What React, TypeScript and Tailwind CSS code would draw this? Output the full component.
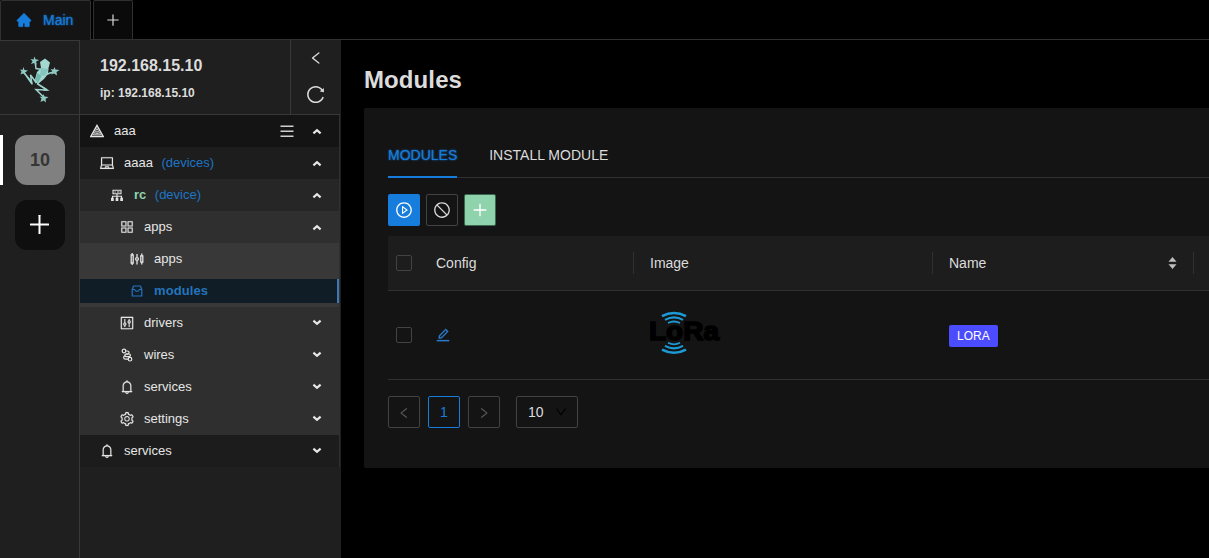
import React from "react";
import {
  AiFillHome,
  AiOutlinePlus,
  AiOutlineLeft,
  AiOutlineRight,
  AiOutlineDown,
  AiOutlineReload,
  AiOutlineLaptop,
  AiOutlineAppstore,
  AiOutlineControl,
  AiOutlineBell,
  AiOutlineSetting,
  AiOutlinePlayCircle,
  AiOutlineStop,
  AiOutlineEdit,
} from "react-icons/ai";

const FrogLogo = () => (
  <svg width="40" height="50" viewBox="0 0 40 50" fill="none" className="mt-1">
    <path d="M20 7 25 3.500 30 7.500 28.500 13 28 19 24 24 18 29 14.500 26 17 17 21 13Z" fill="#a3d8d0" />
    <path d="M21 13 28.500 14 25 21 20 20Z" fill="#86c5bd" />
    <path d="M17.500 18 21.500 21 18 28 15 25Z" fill="#74b7af" />
    <g stroke="#9dd2cb" strokeWidth="1.500" strokeLinejoin="miter">
      <path d="M21 14.200 16 13.500 15 6" />
      <path d="M27 19.200 30 18 35 16.500" />
      <path d="M16.500 28 10.500 20 12 29 4 17.500" />
      <path d="M17 28.500 27 35 16 34.500 24 42.500" />
    </g>
    <path d="M15.500 27 28.500 36 22 35.500 27 34ZM15 25.500 10 18.500 12 21.500 16 29ZM5 18 12.500 30 12 26Z" fill="#9dd2cb" />
    <path d="m14.500 1.500 1 2.800 3.500.7-3 1.800 1 3-3-1.800-3 1 1.500-2.700-2-2.300 3 .5zM3.500 12l1 3 3.500.5-3 2 1 3-3-2-2.500 1 1-3L0 14.500l2.500.5zM34.500 12l1 2.500 4 .5-3 2 .5 3.500-3-2-3 1 1.500-3-2-2.500 3 .5zM23.500 39l1 2.500 4 .5-3 2 .5 3.500-2.500-2-3 1.500 1-3.500-2-2 3 .5z" fill="#8fcac2" />
  </svg>
);

const TriangleIcon = () => (
  <svg width="14" height="14" viewBox="0 0 14 14" fill="none" stroke="currentColor">
    <path d="M7 1.500 13.200 12.500H.8Z" strokeWidth="1.500" />
    <path d="M7 4.500 10.600 10.800H3.400Z" strokeWidth=".9" />
    <path d="M7 7 8.500 9.500H5.500Z" strokeWidth=".8" />
  </svg>
);

const NetworkIcon = () => (
  <svg width="14" height="14" viewBox="0 0 14 14" fill="none" stroke="currentColor" strokeWidth="1.100">
    <path d="M3 2.200h8v3.600H3zM4.500 4h1.200M7 4h2.500M7 5.800v3M2.500 10.300V8.300h9v2M7 8.300v2" />
    <path d="M1.700 10.500h1.400v1.900H1.700zM6.300 10.500h1.400v1.900H6.300zM10.900 10.500h1.400v1.900h-1.400z" strokeWidth="1.300" />
  </svg>
);

const SlidersIcon = () => (
  <svg width="14" height="14" viewBox="0 0 14 14" fill="none" stroke="currentColor" strokeWidth="1.300">
    <path d="M1.200 3h2v8h-2zM2.200 1v2M2.200 11v2M10.800 3.800h2v6.400h-2zM11.800 1.500v2M11.800 10.500v2" />
    <path d="M7 2v3M7 9v3.500" />
    <circle cx="7" cy="7" r="1.400" />
  </svg>
);

const ModuleIcon = () => (
  <svg width="14" height="14" viewBox="0 0 14 14" fill="none" stroke="currentColor" strokeWidth="1.200" strokeLinejoin="round">
    <path d="M2.200 5.500 3.600 2h6.800l1.400 3.500V12H2.200zM2.200 5.500h2.500c.4 2.500 4.200 2.500 4.600 0h2.500" />
  </svg>
);

const WiresIcon = () => (
  <svg width="14" height="14" viewBox="0 0 14 14" fill="none" stroke="currentColor" strokeWidth="1.200">
    <circle cx="4" cy="3" r="1.800" />
    <circle cx="10" cy="11.200" r="1.800" />
    <path d="M5.800 3h1.400c2.400 0 2.400 2.700.4 3.200H5.800M8.200 11.200H5.600C3 11.200 3 7.900 5.400 7.900" />
    <rect x="4.800" y="6" width="5.600" height="2.600" rx="1.300" />
  </svg>
);

const MenuIcon = () => (
  <svg width="14" height="14" viewBox="0 0 14 14" fill="none" stroke="#cfcfcf" strokeWidth="1.500" className="mr-[18px]">
    <path d="M.5 2.200h13M.5 7.200h13M.5 12.200h13" />
  </svg>
);

const Chevron = ({ open }: { open?: boolean }) => (
  <svg width="10" height="7" viewBox="0 0 10 7" fill="none" stroke="#e6e6e6" strokeWidth="2.200" className={open ? "" : "mb-0.5 rotate-180"}>
    <path d="M1.400 5.300 5 2.200 8.600 5.300" />
  </svg>
);

type RowProps = {
  icon: React.ReactNode;
  label: string;
  kind?: string;
  open?: boolean;
  pad: string;
  bg: string;
  labelClass?: string;
  menu?: boolean;
  leaf?: boolean;
};

const Row = ({ icon, label, kind, open, pad, bg, labelClass = "", menu, leaf }: RowProps) => (
  <div className={`flex h-8 items-center pr-[17px] text-[13px] text-[#e6e6e6] ${pad} ${bg}`}>
    <span className="flex w-3.5 shrink-0 justify-center text-base">{icon}</span>
    <span className={`ml-2.5 ${labelClass}`}>{label}</span>
    {kind && <span className="ml-[8.500px] text-[#1d75c4]">{kind}</span>}
    <span className="flex-1" />
    {menu && <MenuIcon />}
    {!leaf && <Chevron open={open} />}
  </div>
);

const glyph = "shrink-0 [stroke:currentColor] [stroke-width:8px]";

const LoraLogo = () => (
  <svg width="72" height="44" viewBox="0 0 72 44" fill="none" stroke="#1c9ad6">
    <path d="M12 5.200Q24 -1.200 36 5.200" strokeWidth="2.600" />
    <path d="M15 8.900Q24 4 33 8.900" strokeWidth="2.200" />
    <path d="M18 12Q24 9 30 12" strokeWidth="1.800" />
    <path d="M12 38.600Q24 45 36 38.600" strokeWidth="2.600" />
    <path d="M15 34.900Q24 39.800 33 34.900" strokeWidth="2.200" />
    <path d="M18 31.800Q24 34.800 30 31.800" strokeWidth="1.800" />
    <text x="-1" y="28.500" fill="#000" stroke="#000" strokeWidth="1.600" fontSize="26" fontWeight="700" textLength="70" lengthAdjust="spacingAndGlyphs" className="font-['Liberation_Sans',sans-serif]">
      LoRa
    </text>
  </svg>
);

const Checkbox = () => <span className="block size-4 rounded-xs border border-[#434343]" />;

export default function App() {
  return (
    <div className="flex h-[558px] w-full flex-col overflow-hidden bg-black font-['Liberation_Sans',Arial,sans-serif] text-[#dcdcdc]">
      <header className="flex h-10 shrink-0 gap-0.5 border-b border-[#303030]">
        <div className="flex h-10 w-[91px] items-center rounded-t-xs border border-b-0 border-[#303030] bg-[#141414] pb-0.5 pl-[15px] text-sm text-[#177ddc]">
          <AiFillHome className="mr-[11px] size-4 [stroke:currentColor] [stroke-width:30px]" />
          <span className="[text-shadow:0_0_2px_#177ddc]">Main</span>
        </div>
        <div className="flex h-[39px] w-10 items-center justify-center rounded-t-xs border border-b-0 border-[#303030] bg-[#0a0a0a] text-base">
          <AiOutlinePlus />
        </div>
      </header>

      <div className="flex min-h-0 flex-1">
        <aside className="flex w-20 shrink-0 flex-col border-r border-[#383838] bg-[#1f1f1f]">
          <div className="flex h-[75px] shrink-0 items-center justify-center border-t border-b border-[#383838]">
            <FrogLogo />
          </div>
          <div className="mt-5 flex items-center gap-3">
            <span className="h-[50px] w-[3px] bg-white" />
            <div className="flex size-[50px] items-center justify-center rounded-xl bg-[#808080] text-lg font-bold text-[#353535]">10</div>
          </div>
          <div className="mt-[15px] ml-[15px] flex size-[50px] items-center justify-center rounded-xl bg-[#0f0f0f] text-white">
            <AiOutlinePlus className="mr-px mb-px size-[27px]" />
          </div>
        </aside>

        <nav className="flex w-[261px] shrink-0 flex-col bg-[#1f1f1f]">
          <div className="flex h-[75px] w-[260px] shrink-0 border-b border-[#383838]">
            <div className="flex-1 pt-[15px] pl-5 font-bold">
              <div className="text-base leading-[22px]">192.168.15.10</div>
              <div className="mt-[7px] text-xs leading-[18px]">ip: 192.168.15.10</div>
            </div>
            <div className="flex w-[50px] flex-col items-center border-l border-[#383838] pt-2.5">
              <AiOutlineLeft className="size-4" />
              <AiOutlineReload className="mt-[18px] size-[21px]" />
            </div>
          </div>
          <div className="w-[260px] border-r border-[#303030]">
            <Row icon={<TriangleIcon />} label="aaa" open menu pad="pl-2.5" bg="bg-[#141414]" />
            <Row icon={<AiOutlineLaptop className={glyph} />} label="aaaa" kind="(devices)" open pad="pl-5" bg="bg-[#1d1d1d]" />
            <Row icon={<NetworkIcon />} label="rc" kind="(device)" open pad="pl-[30px]" bg="bg-[#262626]" labelClass="font-bold text-[#8fd3ad]" />
            <Row icon={<AiOutlineAppstore className={glyph} />} label="apps" open pad="pl-10" bg="bg-[#2f2f2f]" />
            <Row icon={<SlidersIcon />} label="apps" leaf pad="pl-[50px]" bg="bg-[#383838]" />
            <div className="h-8 bg-[#383838] py-1">
              <div className="flex h-6 items-center border-r-2 border-[#3b78b5] bg-[#111d26] pl-[50px] text-[13px] font-bold text-[#2474bd]">
                <ModuleIcon />
                <span className="ml-2.5 tracking-[.08px]">modules</span>
              </div>
            </div>
            <Row icon={<AiOutlineControl className={glyph} />} label="drivers" pad="pl-10" bg="bg-[#2f2f2f]" />
            <Row icon={<WiresIcon />} label="wires" pad="pl-10" bg="bg-[#2f2f2f]" />
            <Row icon={<AiOutlineBell className={glyph} />} label="services" pad="pl-10" bg="bg-[#2f2f2f]" />
            <Row icon={<AiOutlineSetting className={glyph} />} label="settings" pad="pl-10" bg="bg-[#2f2f2f]" />
            <Row icon={<AiOutlineBell className={glyph} />} label="services" pad="pl-5" bg="bg-[#1c1c1c]" />
          </div>
        </nav>

        <main className="min-w-0 flex-1 pt-6 pl-[23px]">
          <h1 className="text-2xl leading-8 font-bold tracking-[.1px]">Modules</h1>
          <section className="mt-3 h-[360px] rounded-l-xs bg-[#141414] pt-6 pl-6 text-sm">
            <div className="flex h-[46px] gap-8 border-b border-[#303030] pt-3">
              <div className="h-[34px] border-b-2 border-[#177ddc] leading-[22px] text-[#177ddc] [text-shadow:0_0_2px_#177ddc]">MODULES</div>
              <div className="leading-[22px]">INSTALL MODULE</div>
            </div>
            <div className="mt-4 flex items-center gap-1.5">
              <button className="flex size-8 items-center justify-center rounded-xs bg-[#177ddc] text-white">
                <AiOutlinePlayCircle className="size-[18px]" />
              </button>
              <button className="flex size-8 items-center justify-center rounded-xs border border-[#434343]">
                <AiOutlineStop className="size-[18px]" />
              </button>
              <button className="flex size-8 items-center justify-center rounded-xs border border-[#3c6650] bg-[#8fd3ad] text-white">
                <AiOutlinePlus className="size-[18px]" />
              </button>
            </div>

            <div className="mt-2.5 flex h-[55px] items-center rounded-tl-xs border-b border-[#303030] bg-[#1d1d1d] pl-2">
              <Checkbox />
              <div className="ml-6 flex h-[22px] w-[198px] items-center border-r border-[#303030]">Config</div>
              <div className="flex h-[22px] w-[299px] items-center border-r border-[#303030] pl-4">Image</div>
              <div className="flex h-[22px] w-[261px] items-center justify-between border-r border-[#303030] pr-4 pl-4">
                Name
                <svg width="9" height="12" viewBox="0 0 9 12" fill="#bfbfbf">
                  <path d="M4.500 0 8.500 4.700H.5ZM4.500 12 8.500 7.300H.5Z" />
                </svg>
              </div>
            </div>
            <div className="flex h-[89px] items-center border-b border-[#303030] pl-2">
              <Checkbox />
              <div className="ml-[23px] w-[214px] text-[#2a7dd0]">
                <AiOutlineEdit className="size-4 [stroke:currentColor] [stroke-width:16px]" />
              </div>
              <div className="w-[300px] pb-1 pl-px">
                <LoraLogo />
              </div>
              <span className="mt-0.5 rounded-xs bg-[#4c4cff] px-2 text-xs leading-[22px] text-white">LORA</span>
            </div>

            <div className="mt-4 flex gap-2">
              <button className="flex size-8 items-center justify-center rounded-xs border border-[#434343] text-sm text-[#5a5a5a]">
                <AiOutlineLeft className="mt-px" />
              </button>
              <button className="flex size-8 items-center justify-center rounded-xs border border-[#177ddc] text-[#177ddc]">1</button>
              <button className="flex size-8 items-center justify-center rounded-xs border border-[#434343] text-sm text-[#5a5a5a]">
                <AiOutlineRight className="mt-px" />
              </button>
              <button className="ml-2 flex h-8 w-[62px] items-center justify-between rounded-xs border border-[#434343] pr-[9px] pl-[11px]">
                10
                <AiOutlineDown className="size-3.5 text-black" />
              </button>
            </div>
          </section>
        </main>
      </div>
    </div>
  );
}
